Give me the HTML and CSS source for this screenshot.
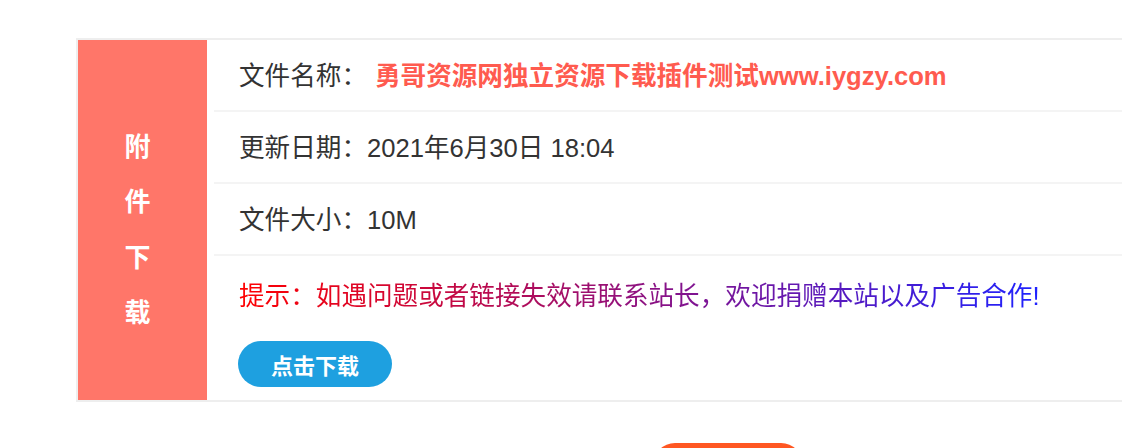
FILE: index.html
```html
<!DOCTYPE html>
<html lang="zh-CN">
<head>
<meta charset="utf-8">
<title>附件下载</title>
<link rel="stylesheet" href="styles.css">
</head>
<body>
<div class="page">
  <div class="download-box">
    <div class="side">
      <span>附</span>
      <span>件</span>
      <span>下</span>
      <span>载</span>
    </div>
    <div class="main">
      <div class="row">文件名称：<span class="title">勇哥资源网独立资源下载插件测试www.iygzy.com</span></div>
      <div class="row">更新日期：2021年6月30日 18:04</div>
      <div class="row">文件大小：10M</div>
      <div class="row last">
        <div class="tip">提示：如遇问题或者链接失效请联系站长，欢迎捐赠本站以及广告合作!</div>
        <a class="btn-download" href="#">点击下载</a>
      </div>
    </div>
  </div>
  <div class="actions">
    <a class="btn-orange" href="#">&nbsp;</a>
  </div>
</div>
</body>
</html>
```

FILE: styles.css
```css
html, body {
  margin: 0;
  padding: 0;
  overflow: hidden;
  background: #fff;
}

body {
  font-family: "Liberation Sans", "Noto Sans CJK SC", sans-serif;
  color: #333;
}

.page {
  padding: 38px 0 0 76px;
  width: 1303px;
}

.download-box {
  display: flex;
  width: 1303px;
  border-top: 2px solid #eee;
  border-bottom: 2px solid #eee;
  border-left: 2px solid #eee;
  box-sizing: border-box;
}

.side {
  width: 129px;
  flex: none;
  background: #ff7669;
  color: #fff;
  font-weight: bold;
  font-size: 26px;
  display: flex;
  flex-direction: column;
  align-items: center;
  justify-content: center;
  padding: 21px 10px 0 0;
  box-sizing: border-box;
}

.side span {
  display: block;
  line-height: 55.5px;
}

.main {
  flex: 1;
  padding-left: 7px;
  display: flex;
  flex-direction: column;
}

.row {
  height: 70px;
  line-height: 73px;
  border-bottom: 2px solid #f4f4f4;
  padding-left: 25px;
  font-size: 25.6px;
  white-space: nowrap;
}

.row.last {
  height: auto;
  border-bottom: none;
  padding-top: 20px;
  padding-bottom: 13px;
  line-height: normal;
}

.title {
  color: #ff5b4f;
  font-weight: bold;
  margin-left: 8px;
}

.tip {
  display: inline-block;
  line-height: 40px;
  background: linear-gradient(to right, #ff0000, #1e22ff);
  -webkit-background-clip: text;
  background-clip: text;
  color: transparent;
}

.btn-download {
  display: flex;
  align-items: center;
  justify-content: center;
  margin-top: 25px;
  width: 154px;
  height: 46px;
  border-radius: 23px;
  background: #1ea0e0;
  color: #fff;
  font-weight: bold;
  font-size: 22px;
  text-decoration: none;
  margin-left: -1px;
}

.actions {
  display: flex;
  justify-content: center;
  margin-top: 41px;
}

.btn-orange {
  display: block;
  width: 150px;
  height: 44px;
  border-radius: 22px;
  background: #ff5722;
  text-decoration: none;
}
```
